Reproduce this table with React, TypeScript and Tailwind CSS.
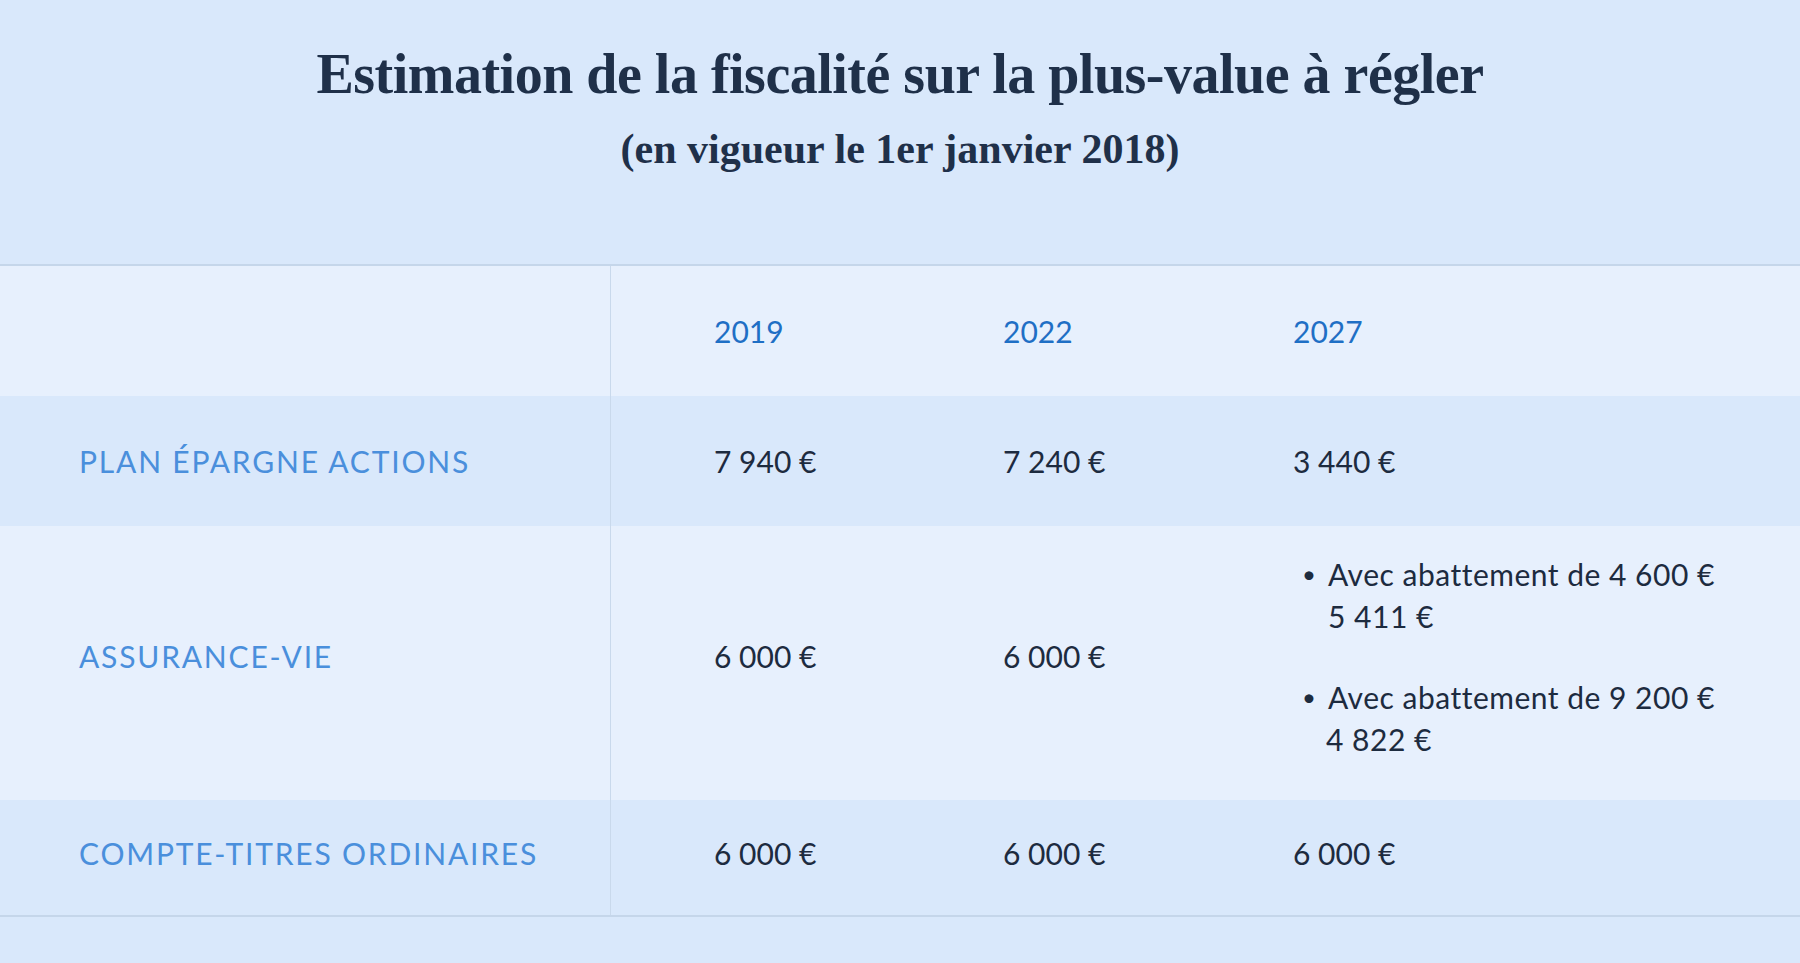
const years = ["2019", "2022", "2027"];

const rows = [
  {
    label: "PLAN ÉPARGNE ACTIONS",
    values: ["7 940 €", "7 240 €", "3 440 €"],
    bg: "bg-[#d9e8fb]",
    h: "h-[130px]",
    pad: "",
  },
  {
    label: "ASSURANCE-VIE",
    values: ["6 000 €", "6 000 €", null],
    bg: "bg-[#e7f0fd]",
    h: "h-[274px]",
    pad: "pb-[14px]",
  },
  {
    label: "COMPTE-TITRES ORDINAIRES",
    values: ["6 000 €", "6 000 €", "6 000 €"],
    bg: "bg-[#d9e8fb]",
    h: "h-[115px]",
    pad: "pb-[9px]",
  },
];

const abattements = [
  { text: "Avec abattement de 4 600 €", amount: "5 411 €", shift: "" },
  { text: "Avec abattement de 9 200 €", amount: "4 822 €", shift: "-ml-[2px]" },
];

function AssuranceList() {
  return (
    <ul className="flex flex-col gap-[39px] pl-[9px] tracking-[0.5px]">
      {abattements.map((a) => (
        <li key={a.text} className="flex gap-[19px]">
          <span className="w-[7px] text-[24px]">•</span>
          <div className="flex flex-col">
            <span>{a.text}</span>
            <span className={a.shift}>{a.amount}</span>
          </div>
        </li>
      ))}
    </ul>
  );
}

export default function App() {
  return (
    <div className="min-h-screen bg-[#d9e8fb] font-['Lato',sans-serif] text-[#1d2b3f]">
      {/* Heading */}
      <header className="flex h-[264px] flex-col items-center pt-[38px] font-['Liberation_Serif',serif] font-bold text-[#1f3049]">
        <h1 className="text-[56px] leading-[72px] tracking-[-0.5px]">
          Estimation de la fiscalité sur la plus-value à régler
        </h1>
        <p className="mt-[13px] text-[42px] leading-[52px]">(en vigueur le 1er janvier 2018)</p>
      </header>

      {/* Table */}
      <div className="border-y-2 border-[#c5d6ea] text-[30px] leading-[42px]">
        <div className="grid h-[130px] grid-cols-[611px_289px_290px_1fr] bg-[#e7f0fd]">
          <div className="border-r border-[#c9d9ec]" />
          {years.map((y) => (
            <div key={y} className="flex items-center pl-[103px] text-[#1f6fc5]">
              {y}
            </div>
          ))}
        </div>

        {rows.map((row) => (
          <div key={row.label} className={`grid grid-cols-[611px_289px_290px_1fr] ${row.bg} ${row.h}`}>
            <div
              className={`flex items-center border-r border-[#c9d9ec] pl-[79px] tracking-[1.8px] text-[#4a8fdc] ${row.pad}`}
            >
              {row.label}
            </div>
            {row.values.map((v, i) => (
              <div key={i} className={`flex items-center pl-[103px] ${row.pad}`}>
                {v ?? <AssuranceList />}
              </div>
            ))}
          </div>
        ))}
      </div>
    </div>
  );
}
